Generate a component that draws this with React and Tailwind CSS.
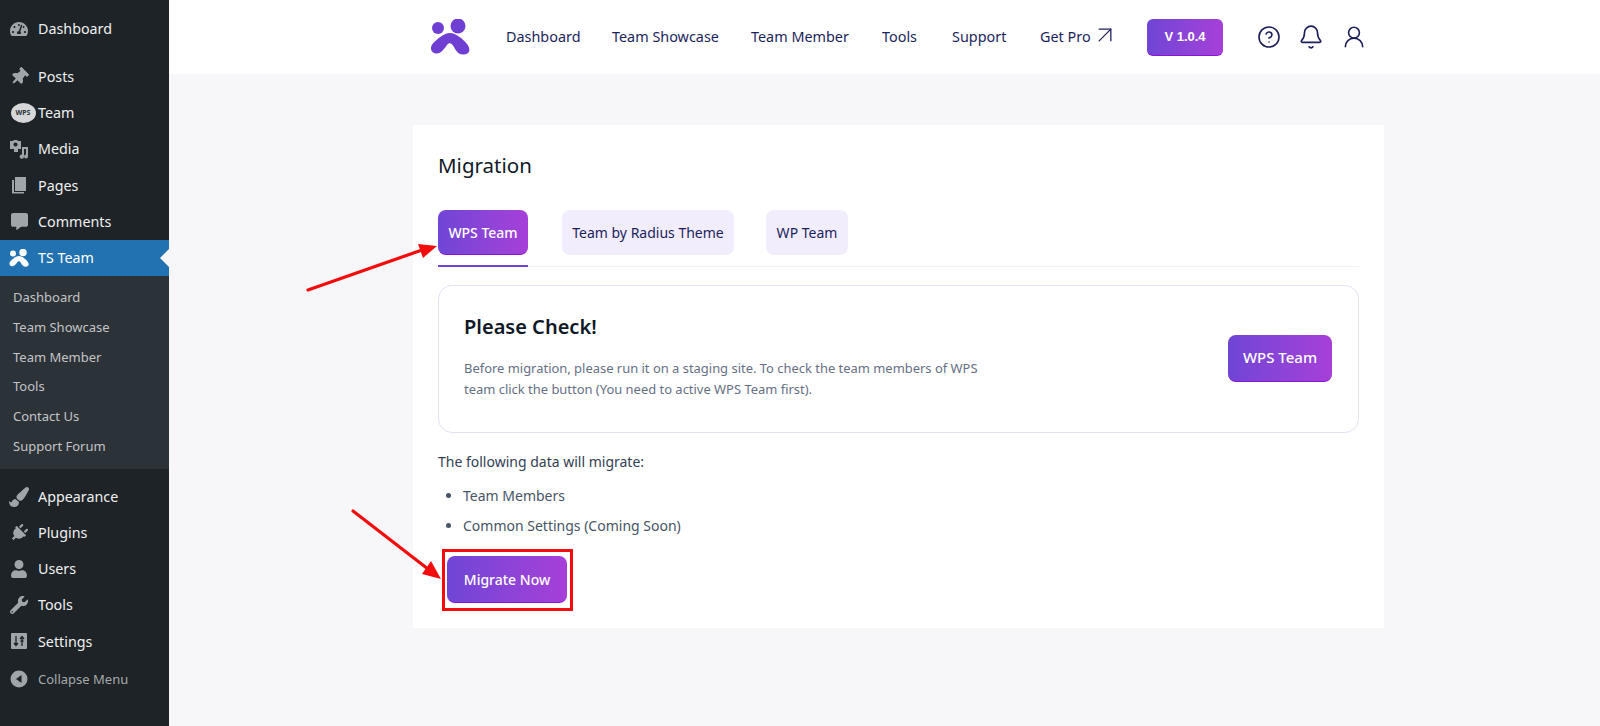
import { FaTachometerAlt, FaThumbtack, FaCommentAlt, FaPaintBrush, FaPlug, FaUser, FaWrench } from "react-icons/fa";
import { ArrowUpRight, CircleHelp, Bell, UserRound } from "lucide-react";

const FONT = "font-['Noto_Sans','Open_Sans',sans-serif]";

function TeamLogo({ className, color }) {
  return (
    <svg viewBox="0 0 40 36" className={className} fill={color}>
      <circle cx="8" cy="9" r="6" />
      <circle cx="28" cy="7" r="7.500" />
      <path d="M20 14C26 14 33 20 37 25C41 30 40 35 34 35.500C29 36 26 32 24 28C22 24 19 23 17 26C14 30 11 35 6 34.500C1 34-.5 29 2.500 25C7 20 14 14 20 14z" />
    </svg>
  );
}

function MediaIcon() {
  return (
    <svg viewBox="0 0 20 20" className="w-5 h-5" fill="#a0a5aa">
      <path d="M1 2h3l1-1h3l1 1h3v8H9v3H5v-3H1z" />
      <circle cx="6.500" cy="5.500" r="2" fill="#1d2327" />
      <path d="M13 8h6v9.500a2 2 0 1 1-2-2V10h-2v7.500a2.200 2.200 0 1 1-2-2.100z" />
    </svg>
  );
}

function PagesIcon() {
  return (
    <svg viewBox="0 0 20 20" className="w-5 h-5" fill="#a0a5aa">
      <path d="M6 2h11v14H6z" />
      <path d="M3 5h2v12h10v1.500H3z" />
    </svg>
  );
}

function SettingsIcon() {
  return (
    <svg viewBox="0 0 18 18" className="w-[18px] h-[18px]">
      <rect x="1" y="1" width="16" height="16" rx="1" fill="#a0a5aa" />
      <path d="M6 4v9M4 11l2 2.500L8 11M12 14V5M10 7l2-2.500L14 7M10.500 9h3" stroke="#1d2327" strokeWidth="1.300" fill="none" />
    </svg>
  );
}

function CollapseIcon() {
  return (
    <svg viewBox="0 0 18 18" className="w-[18px] h-[18px]">
      <circle cx="9" cy="9" r="8.500" fill="#a0a5aa" />
      <path d="M11.500 5v8L6 9z" fill="#1d2327" />
    </svg>
  );
}

function WpsBadge() {
  return (
    <span className="flex items-center justify-center w-[25px] h-[20px] ml-[8px] rounded-[50%] bg-[#d5d7d9] text-[7px] font-bold text-[#2c3338] shrink-0">
      WPS
    </span>
  );
}

function MenuRow({ icon, label }) {
  return (
    <div className="flex items-center h-[36.200px] text-[14.300px] text-[#f0f0f1]">
      <span className="w-[38px] flex justify-center text-[#a0a5aa] text-[18px]">{icon}</span>
      {label}
    </div>
  );
}

function Sidebar() {
  const top = [
    [<FaThumbtack className="rotate-45" />, "Posts"],
    [<WpsBadge />, "Team"],
    [<MediaIcon />, "Media"],
    [<PagesIcon />, "Pages"],
    [<FaCommentAlt className="text-[17px]" />, "Comments"],
  ];
  const sub = ["Dashboard", "Team Showcase", "Team Member", "Tools", "Contact Us", "Support Forum"];
  const bottom = [
    [<FaPaintBrush className="text-[20px]" />, "Appearance"],
    [<FaPlug className="rotate-45" />, "Plugins"],
    [<FaUser />, "Users"],
    [<FaWrench />, "Tools"],
    [<SettingsIcon />, "Settings"],
  ];
  return (
    <aside className="w-[169px] shrink-0 bg-[#1d2327] pt-[11px]">
      <div className="mb-[11.500px]">
        <MenuRow icon={<FaTachometerAlt />} label="Dashboard" />
      </div>
      {top.map(([icon, label]) => (
        <MenuRow key={label} icon={icon} label={label} />
      ))}
      <div className="relative flex items-center h-[36px] bg-[#2271b1] text-[14.300px] text-white">
        <span className="w-[38px] flex justify-center">
          <TeamLogo className="w-[20px] h-[18px]" color="#ffffff" />
        </span>
        TS Team
        <span className="absolute right-0 top-[9px] border-y-[9px] border-r-[9px] border-y-transparent border-r-[#f7f7fa]" />
      </div>
      <div className="bg-[#2c3338] pt-[7px] pb-[7px] mb-[9.500px]">
        {sub.map((label) => (
          <div key={label} className="flex items-center h-[29.900px] pl-[13px] text-[13px] text-[#c3c4c7]">
            {label}
          </div>
        ))}
      </div>
      {bottom.map(([icon, label]) => (
        <MenuRow key={label} icon={icon} label={label} />
      ))}
      <div className="flex items-center h-[36px] mt-[2px] text-[13px] text-[#a7aaad]">
        <span className="w-[38px] flex justify-center">
          <CollapseIcon />
        </span>
        Collapse Menu
      </div>
    </aside>
  );
}

function Header() {
  const links = [
    ["Dashboard", "w-[106px]"],
    ["Team Showcase", "w-[139px]"],
    ["Team Member", "w-[131px]"],
    ["Tools", "w-[70px]"],
    ["Support", "w-[88px]"],
  ];
  return (
    <header className="flex items-center h-[74px] bg-white pl-[261px] text-[#1c1f5c]">
      <TeamLogo className="w-[40px] h-[36px]" color="#6f3fd3" />
      <nav className="flex items-center ml-[36px] text-[14.400px]">
        {links.map(([label, width]) => (
          <span key={label} className={width}>
            {label}
          </span>
        ))}
        <span className="flex items-center w-[107px]">
          Get Pro
          <ArrowUpRight className="w-[28px] h-[28px] -mt-[4px]" strokeWidth={1.100} />
        </span>
      </nav>
      <span className="flex items-center justify-center w-[76px] h-[37px] rounded-[6px] border-b border-[#8a14d8] bg-gradient-to-r from-[#6f45d6] to-[#a63fd8] text-white text-[13px] font-semibold font-['Liberation_Sans',sans-serif]">
        V 1.0.4
      </span>
      <div className="flex items-center gap-[17px] ml-[34px]">
        <CircleHelp className="w-[24px] h-[24px]" strokeWidth={1.600} />
        <Bell className="w-[26px] h-[26px]" strokeWidth={1.500} />
        <UserRound className="w-[26px] h-[26px]" strokeWidth={1.500} />
      </div>
    </header>
  );
}

function GradientButton({ children, className }) {
  return (
    <button className={`flex items-center justify-center rounded-[8px] border-b border-[#8a14d8] bg-gradient-to-r from-[#6f45d6] to-[#a63fd8] text-white font-medium ${className}`}>
      {children}
    </button>
  );
}

function Tabs() {
  return (
    <div className="flex gap-[33px] h-[57px] border-b border-[#f1eff8]">
      <div className="w-[90px] h-[57px] mr-[1px] border-b-[2px] border-[#6f45d6]">
        <GradientButton className="w-[90px] h-[45px] text-[14px]">WPS Team</GradientButton>
      </div>
      <span className="flex items-center justify-center w-[172px] h-[45px] -mr-[1px] rounded-[8px] bg-[#f1edfd] text-[14px] text-[#1c1f5c]">
        Team by Radius Theme
      </span>
      <span className="flex items-center justify-center w-[82px] h-[45px] rounded-[8px] bg-[#f1edfd] text-[14px] text-[#1c1f5c]">
        WP Team
      </span>
    </div>
  );
}

function Arrows() {
  return (
    <svg className="absolute left-0 top-0 pointer-events-none" width="1600" height="726" fill="none">
      <path d="M308 290 L422 250" stroke="#f40c0c" strokeWidth="3.200" strokeLinecap="round" />
      <path d="M437 246 L418 244 L423 258z" fill="#f40c0c" />
      <path d="M353 511 L428 569" stroke="#f40c0c" strokeWidth="3.200" strokeLinecap="round" />
      <path d="M441 579 L422 574 L431 561z" fill="#f40c0c" />
    </svg>
  );
}

export default function App() {
  return (
    <div className={`relative flex h-[726px] overflow-hidden bg-[#f7f7fa] ${FONT}`}>
      <Sidebar />
      <main className="flex-1">
        <Header />
        <section className="w-[971px] h-[503px] ml-[244px] mt-[51px] bg-white px-[25px] pt-[25px]">
          <h1 className="text-[20.500px] leading-[30px] text-[#101828]">Migration</h1>
          <div className="mt-[30px]">
            <Tabs />
          </div>
          <div className="flex items-center justify-between h-[148px] mt-[18px] px-[25px] pb-[2px] rounded-[14px] border border-[#e4e0f5]">
            <div className="-mt-[3px]">
              <h2 className="text-[20px] leading-[28px] font-semibold text-[#101828]">Please Check!</h2>
              <p className="w-[530px] mt-[17px] text-[12.950px] leading-[21px] text-[#667085]">
                Before migration, please run it on a staging site. To check the team members of WPS team click the button (You need to active WPS Team first).
              </p>
            </div>
            <GradientButton className="w-[104px] h-[47px] mr-[1px] text-[15px]">WPS Team</GradientButton>
          </div>
          <p className="mt-[19px] text-[14px] leading-[20px] text-[#344054]">The following data will migrate:</p>
          <ul className="mt-[14px] list-disc pl-[25px] text-[14px] leading-[20px] text-[#475467] space-y-[10px]">
            <li>Team Members</li>
            <li>Common Settings (Coming Soon)</li>
          </ul>
          <div className="w-[131px] h-[62px] mt-[13px] ml-[4px] pl-[2px] pt-[4px] border-[3px] border-[#f40c0c]">
            <GradientButton className="w-[120px] h-[47px] text-[14px]">Migrate Now</GradientButton>
          </div>
        </section>
      </main>
      <Arrows />
    </div>
  );
}
